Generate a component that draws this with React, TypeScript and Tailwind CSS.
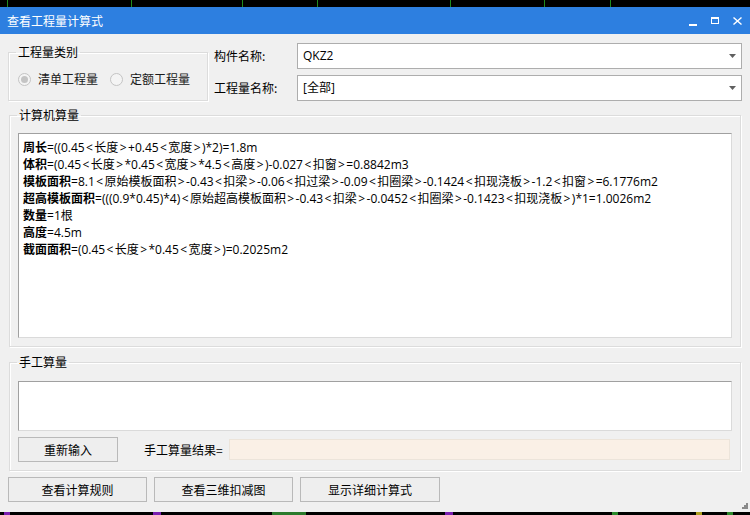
import React from "react"

const font = "font-['Microsoft_YaHei','Noto_Sans_CJK_SC',sans-serif]"
const latin = "font-['Open_Sans','Noto_Sans_CJK_SC',sans-serif]"

const lines: { label: string; value: string }[] = [
  { label: "周长", value: "=((0.45<长度>+0.45<宽度>)*2)=1.8m" },
  { label: "体积", value: "=(0.45<长度>*0.45<宽度>*4.5<高度>)-0.027<扣窗>=0.8842m3" },
  {
    label: "模板面积",
    value: "=8.1<原始模板面积>-0.43<扣梁>-0.06<扣过梁>-0.09<扣圈梁>-0.1424<扣现浇板>-1.2<扣窗>=6.1776m2",
  },
  {
    label: "超高模板面积",
    value: "=(((0.9*0.45)*4)<原始超高模板面积>-0.43<扣梁>-0.0452<扣圈梁>-0.1423<扣现浇板>)*1=1.0026m2",
  },
  { label: "数量", value: "=1根" },
  { label: "高度", value: "=4.5m" },
  { label: "截面面积", value: "=(0.45<长度>*0.45<宽度>)=0.2025m2" },
]

// the brackets in the original font sit with wide side bearings
const Formula = ({ value }: { value: string }) => (
  <>
    {value.split(/([<>])/).map((part, i) =>
      part === "<" || part === ">" ? (
        <span key={i} className="px-[1.4px]">
          {part}
        </span>
      ) : (
        <React.Fragment key={i}>{part}</React.Fragment>
      )
    )}
  </>
)

const Combo = ({ value }: { value: string }) => (
  <div className="flex h-[26px] w-[445px] items-center justify-between border border-[#adadad] bg-white pl-[5px] pr-[5px]">
    <span className={`text-[12px] ${latin}`}>{value}</span>
    <svg width="7" height="4" viewBox="0 0 7 4">
      <path d="M0 0h7L3.5 4z" fill="#606060" />
    </svg>
  </div>
)

const Radio = ({ checked, label }: { checked?: boolean; label: string }) => (
  <label className="flex items-center gap-[7px]">
    <span className="flex h-[13px] w-[13px] items-center justify-center rounded-full border border-[#c4c4c4] bg-[#f4f4f4]">
      {checked && <span className="h-[7px] w-[7px] rounded-full bg-[#c4c4c4]" />}
    </span>
    <span className="text-[12px] text-[#1a1a1a]">{label}</span>
  </label>
)

const Group = ({ title, className, children }: { title: string; className: string; children: React.ReactNode }) => (
  <fieldset className={`border border-[#dcdcdc] shadow-[inset_1px_1px_0_#fff,1px_1px_0_#fff] ${className}`}>
    <legend className="ml-[7px] px-[2px] text-[12px] leading-[16px]">{title}</legend>
    {children}
  </fieldset>
)

const Button = ({ label, className }: { label: string; className: string }) => (
  <button className={`flex h-[25px] items-center justify-center border border-[#b9b9b9] bg-[#eeeeee] text-[12px] ${className}`}>
    {label}
  </button>
)

export default function App() {
  const greens = [7, 131, 242, 317, 450, 544, 610]
  return (
    <div className={`relative flex h-[515px] w-[750px] flex-col overflow-hidden bg-black text-black ${font}`}>
      <div className="relative h-[7px] shrink-0">
        {greens.map((x) => (
          <div key={x} className="absolute top-0 h-[7px] w-px bg-[#1f8a1f]" style={{ left: x }} />
        ))}
      </div>

      <div className="flex h-[27px] shrink-0 items-center justify-between bg-[#2d7fe0] pl-[7px] pr-[8px] text-white">
        <span className="text-[12px]">查看工程量计算式</span>
        <div className="flex items-center gap-[14px]">
          <div className="mt-[9px] h-[2px] w-[8px] bg-white" />
          <div className="h-[7px] w-[8px] border border-t-2 border-white" />
          <svg width="9" height="8" viewBox="0 0 9 8">
            <path d="M0.5 0.5L8.5 7.5M8.5 0.5L0.5 7.5" stroke="#fff" strokeWidth="1.4" />
          </svg>
        </div>
      </div>

      <div className="relative flex h-[478px] shrink-0 flex-col bg-[#f0f0f0]">
        <div className="flex pl-[8px] pt-[9px]">
          <Group title="工程量类别" className="mt-[1px] h-[57px] w-[200px]">
            <div className="flex h-[40px] items-center gap-[12px] pb-[2px] pl-[9px]">
              <Radio checked label="清单工程量" />
              <Radio label="定额工程量" />
            </div>
          </Group>
          <div className="ml-[6px] flex flex-col gap-[6px]">
            <div className="flex items-center">
              <span className="w-[83px] text-[12px]">构件名称:</span>
              <Combo value="QKZ2" />
            </div>
            <div className="flex items-center">
              <span className="w-[83px] text-[12px]">工程量名称:</span>
              <Combo value="[全部]" />
            </div>
          </div>
        </div>

        <Group title="计算机算量" className="ml-[9px] mt-[6px] h-[240px] w-[732px]">
          <div
            className={`ml-[8px] mt-[10px] h-[205px] w-[714px] border border-b-[#dadada] border-l-[#a0a0a0] border-r-[#dadada] border-t-[#a0a0a0] bg-white pl-[4px] pt-[5px] text-[12px] leading-[17px] ${latin}`}
          >
            {lines.map((l) => (
              <div key={l.label} className="whitespace-nowrap">
                <span className="font-bold">{l.label}</span>
                <Formula value={l.value} />
              </div>
            ))}
          </div>
        </Group>

        <Group title="手工算量" className="ml-[9px] mt-[7px] h-[117px] w-[732px]">
          <div className="ml-[8px] mt-[11px] h-[50px] w-[714px] border border-b-[#dadada] border-l-[#a0a0a0] border-r-[#dadada] border-t-[#a0a0a0] bg-white" />
          <div className="ml-[8px] mt-[6px] flex items-center">
            <Button label="重新输入" className="w-[100px]" />
            <span className="ml-[26px] text-[12px]">手工算量结果=</span>
            <div className="ml-[6px] h-[21px] w-[501px] border border-[#ece4da] bg-[#faf0e6]" />
          </div>
        </Group>

        <div className="ml-[8px] mt-[6px] flex gap-[7px]">
          <Button label="查看计算规则" className="w-[139px]" />
          <Button label="查看三维扣减图" className="w-[139px]" />
          <Button label="显示详细计算式" className="w-[140px]" />
        </div>

        <svg className="absolute bottom-[3px] right-[2px]" width="6" height="6" viewBox="0 0 6 6">
          <rect x="4" y="0" width="2" height="2" fill="#8a8a8a" />
          <rect x="2" y="2" width="2" height="2" fill="#8a8a8a" />
          <rect x="4" y="2" width="2" height="2" fill="#8a8a8a" />
          <rect x="0" y="4" width="2" height="2" fill="#8a8a8a" />
          <rect x="2" y="4" width="2" height="2" fill="#8a8a8a" />
          <rect x="4" y="4" width="2" height="2" fill="#8a8a8a" />
        </svg>
      </div>

      <div className="relative h-[3px] shrink-0">
        <div className="absolute left-[4px] top-0 h-[3px] w-[6px] bg-[#7a1fb0]" />
        <div className="absolute left-[153px] top-0 h-[3px] w-[8px] bg-[#7a1fb0]" />
        <div className="absolute left-[272px] top-0 h-[3px] w-[34px] bg-[#2c7a2c]" />
        <div className="absolute left-[445px] top-0 h-[3px] w-[8px] bg-[#7a1fb0]" />
        <div className="absolute left-[612px] top-0 h-[3px] w-[6px] bg-[#2c8a2c]" />
        <div className="absolute left-[696px] top-0 h-[3px] w-[6px] bg-[#b0a020]" />
        <div className="absolute left-[727px] top-0 h-[3px] w-[6px] bg-[#2c8a2c]" />
      </div>
    </div>
  )
}
